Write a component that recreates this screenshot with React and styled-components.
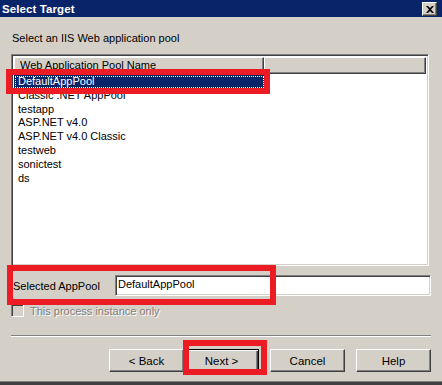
import React from 'react'
import styled, { createGlobalStyle, css } from 'styled-components'

const GlobalStyle = createGlobalStyle`
  html, body {
    margin: 0;
    padding: 0;
    background: #d4d0c8;
  }
  body {
    font-family: Tahoma, "Liberation Sans", Arial, sans-serif;
    font-size: 11px;
    color: #000;
  }
`;

const Window = styled.div`
  position: relative;
  width: 442px;
  height: 385px;
  background: #d4d0c8;
  display: flex;
  flex-direction: column;
  overflow: hidden;
`;

const TitleBar = styled.div`
  height: 17px;
  background: #0a246a;
  display: flex;
  align-items: center;
  justify-content: space-between;
  padding: 0 5px 0 2px;
  flex-shrink: 0;
`;

const Title = styled.span`
  color: #fff;
  font-weight: bold;
  font-size: 11.5px;
  letter-spacing: 0.1px;
`;

const CloseButton = styled.div`
  width: 15px;
  height: 14px;
  box-sizing: border-box;
  background: #d4d0c8;
  border: 1px solid;
  border-color: #fff #404040 #404040 #fff;
  box-shadow: inset -1px -1px #808080;
  display: flex;
  align-items: center;
  justify-content: center;
  margin-top: 1px;
`;

const Content = styled.div`
  display: flex;
  flex-direction: column;
  padding: 0 11px;
  width: 420px;
`;

const Prompt = styled.div`
  margin-top: 15px;
  line-height: 13px;
  padding-left: 1px;
`;

const sunken = css`
  box-sizing: border-box;
  border: 1px solid;
  border-color: #808080 #fff #fff #808080;
  box-shadow: inset 1px 1px #404040, inset -1px -1px #d4d0c8;
`;

const ListView = styled.div`
  ${sunken};
  margin-top: 9px;
  width: 418px;
  height: 212px;
  background: #fff;
  padding: 2px;
  display: flex;
  flex-direction: column;
`;

const HeaderRow = styled.div`
  display: flex;
  height: 17px;
  flex-shrink: 0;
`;

const HeaderCell = styled.div`
  box-sizing: border-box;
  width: ${p => p.$width ? `${p.$width}px` : 'auto'};
  flex: ${p => p.$width ? 'none' : 1};
  background: #d4d0c8;
  border: 1px solid;
  border-color: #fff #404040 #404040 #fff;
  box-shadow: inset -1px -1px #808080;
  padding-left: 5px;
  line-height: 14px;
  white-space: nowrap;
  overflow: hidden;
`;

const Rows = styled.div`
  display: flex;
  flex-direction: column;
  padding-top: 1px;
`;

const Row = styled.div`
  box-sizing: border-box;
  width: 251px;
  height: 13.8px;
  line-height: 13.8px;
  padding-left: 4px;
  white-space: nowrap;
  ${p => p.$selected && css`
    background: #0a246a;
    color: #fff;
    outline: 1px dotted #fff;
    outline-offset: -2px;
  `}
`;

const FieldRow = styled.div`
  margin-top: 9px;
  display: flex;
  align-items: center;
  height: 21px;
`;

const FieldLabel = styled.span`
  width: 102px;
  padding-left: 2px;
`;

const TextBox = styled.div`
  ${sunken};
  width: 316px;
  height: 21px;
  background: #fff;
  padding: 0 2px;
  line-height: 16px;
`;

const CheckRow = styled.div`
  margin-top: 8px;
  display: flex;
  align-items: center;
  height: 13px;
  gap: 6px;
`;

const CheckBox = styled.div`
  ${sunken};
  width: 13px;
  height: 13px;
  background: #d4d0c8;
`;

const DisabledText = styled.span`
  color: #808080;
  text-shadow: 1px 1px 0 #fff;
`;

const Separator = styled.div`
  margin-top: 18px;
  height: 0;
  border-top: 1px solid #808080;
  border-bottom: 1px solid #fff;
`;

const ButtonBar = styled.div`
  margin-top: 12px;
  display: flex;
  justify-content: flex-end;
  gap: 11px;
`;

const ButtonPair = styled.div`
  display: flex;
`;

const Button = styled.div`
  box-sizing: border-box;
  width: 75px;
  height: 23px;
  background: #d4d0c8;
  display: flex;
  align-items: center;
  justify-content: center;
  font-size: 11.5px;
  border: 1px solid;
  border-color: #fff #404040 #404040 #fff;
  box-shadow: inset -1px -1px #808080;
  ${p => p.$default && css`
    border-color: #000;
    box-shadow: inset 1px 1px #fff, inset -1px -1px #404040, inset -2px -2px #808080;
  `}
`;

const BottomEdge = styled.div`
  position: absolute;
  left: 0;
  right: 0;
  bottom: 0;
  height: 3px;
  background: #404040;
  border-top: 1px solid #808080;
`;

const Highlight = styled.div`
  position: absolute;
  box-sizing: border-box;
  border: ${p => p.$w || 6}px solid #ed1c24;
  left: ${p => p.$x}px;
  top: ${p => p.$y}px;
  width: ${p => p.$width}px;
  height: ${p => p.$height}px;
  pointer-events: none;
`;

const pools = [
  'DefaultAppPool',
  'Classic .NET AppPool',
  'testapp',
  'ASP.NET v4.0',
  'ASP.NET v4.0 Classic',
  'testweb',
  'sonictest',
  'ds',
];

export default function App() {
  return (
    <>
      <GlobalStyle />
      <Window>
        <TitleBar>
          <Title>Select Target</Title>
          <CloseButton>
            <svg width="8" height="7" viewBox="0 0 8 7">
              <path d="M0 0h2l2 2 2-2h2L5 3.5 8 7H6L4 5 2 7H0l3-3.5z" fill="#000" />
            </svg>
          </CloseButton>
        </TitleBar>
        <Content>
          <Prompt>Select an IIS Web application pool</Prompt>
          <ListView>
            <HeaderRow>
              <HeaderCell $width={250}>Web Application Pool Name</HeaderCell>
              <HeaderCell />
            </HeaderRow>
            <Rows>
              {pools.map((name, i) => (
                <Row key={name} $selected={i === 0}>{name}</Row>
              ))}
            </Rows>
          </ListView>
          <FieldRow>
            <FieldLabel>Selected AppPool</FieldLabel>
            <TextBox>DefaultAppPool</TextBox>
          </FieldRow>
          <CheckRow>
            <CheckBox />
            <DisabledText>This process instance only</DisabledText>
          </CheckRow>
          <Separator />
          <ButtonBar>
            <ButtonPair>
              <Button>&lt; Back</Button>
              <Button $default>Next &gt;</Button>
            </ButtonPair>
            <Button>Cancel</Button>
            <Button>Help</Button>
          </ButtonBar>
        </Content>
        <BottomEdge />
        <Highlight $x={6} $y={69} $width={264} $height={25} $w={6} />
        <Highlight $x={7} $y={265} $width={269} $height={40} />
        <Highlight $x={183} $y={340} $width={84} $height={35} />
      </Window>
    </>
  );
}
